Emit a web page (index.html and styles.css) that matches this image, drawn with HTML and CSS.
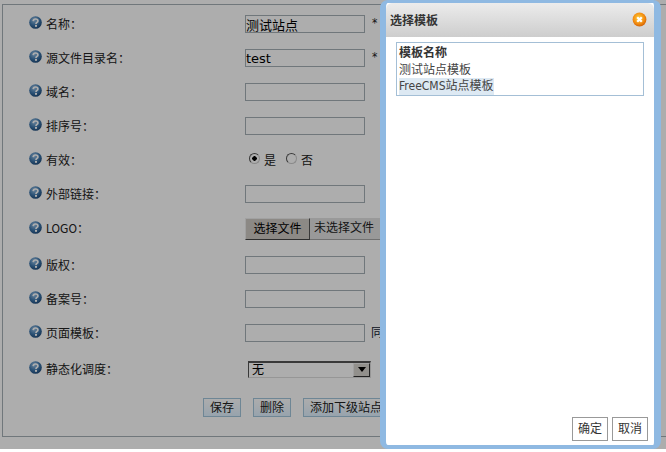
FILE: index.html
```html
<!DOCTYPE html>
<html lang="zh-CN">
<head>
<meta charset="utf-8">
<title>选择模板</title>
<link rel="stylesheet" href="styles.css">
</head>
<body>
<svg class="defs" width="0" height="0" aria-hidden="true">
  <defs>
    <radialGradient id="hg" cx="40%" cy="30%" r="75%">
      <stop offset="0" stop-color="#9cc4e8"/>
      <stop offset=".55" stop-color="#4079ae"/>
      <stop offset="1" stop-color="#1a4675"/>
    </radialGradient>
    <symbol id="help" viewBox="0 0 13 13">
      <circle cx="6.5" cy="6.5" r="6.3" fill="url(#hg)"/>
      <path d="M4.2 5.1C4.3 3.7 5.3 3 6.6 3 8 3 8.9 3.8 8.9 4.9 8.9 6.4 7 6.5 7 7.9" fill="none" stroke="#fff" stroke-width="1.7"/>
      <rect x="6" y="8.9" width="2" height="1.9" fill="#fff"/>
    </symbol>
  </defs>
</svg>
<div class="frame">
  <div class="row"><svg class="help"><use href="#help"/></svg><label class="lbl">名称：</label><input class="txt" value="测试站点"><span class="req">*</span></div>
  <div class="row"><svg class="help"><use href="#help"/></svg><label class="lbl">源文件目录名：</label><input class="txt" value="test"><span class="req">*</span></div>
  <div class="row"><svg class="help"><use href="#help"/></svg><label class="lbl">域名：</label><input class="txt"></div>
  <div class="row"><svg class="help"><use href="#help"/></svg><label class="lbl">排序号：</label><input class="txt"></div>
  <div class="row"><svg class="help"><use href="#help"/></svg><label class="lbl">有效：</label>
    <div class="radios"><input class="radio" type="radio" name="v" checked><span class="rtext">是</span><input class="radio" type="radio" name="v"><span class="rtext">否</span></div>
  </div>
  <div class="row"><svg class="help"><use href="#help"/></svg><label class="lbl">外部链接：</label><input class="txt"></div>
  <div class="row row-file"><svg class="help"><use href="#help"/></svg><label class="lbl">LOGO：</label>
    <div class="file"><span class="file-btn">选择文件</span><span class="file-name">未选择文件</span></div>
  </div>
  <div class="row"><svg class="help"><use href="#help"/></svg><label class="lbl">版权：</label><input class="txt"></div>
  <div class="row"><svg class="help"><use href="#help"/></svg><label class="lbl">备案号：</label><input class="txt"></div>
  <div class="row"><svg class="help"><use href="#help"/></svg><label class="lbl">页面模板：</label><input class="txt"><span class="same">同步</span></div>
  <div class="row row-select"><svg class="help"><use href="#help"/></svg><label class="lbl">静态化调度：</label>
    <div class="select"><span class="select-val">无</span><span class="select-arrow"><svg width="8" height="5" viewBox="0 0 8 5"><path d="M0 0h8L4 5z" fill="#000"/></svg></span></div>
  </div>
  <div class="actions"><button class="act">保存</button><button class="act">删除</button><button class="act">添加下级站点</button></div>
</div>
<div class="overlay"></div>
<div class="dialog">
  <div class="dlg-title"><span>选择模板</span>
    <svg class="close" width="15" height="15" viewBox="0 0 15 15">
      <defs><radialGradient id="cg" cx="45%" cy="40%" r="65%"><stop offset="0" stop-color="#ffd23c"/><stop offset=".65" stop-color="#f28a10"/><stop offset="1" stop-color="#c95a05"/></radialGradient></defs>
      <circle cx="7.5" cy="7.5" r="6.9" fill="url(#cg)"/>
      <path d="M5.2 5.2l4.6 4.6M9.8 5.2l-4.6 4.6" stroke="#fff" stroke-width="2.3"/>
    </svg>
  </div>
  <div class="dlg-body">
    <div class="tlist">
      <div class="thead">模板名称</div>
      <div class="titem">测试站点模板</div>
      <div class="titem"><span class="sel">FreeCMS站点模板</span></div>
    </div>
  </div>
  <div class="dlg-foot"><button class="dbtn">确定</button><button class="dbtn">取消</button></div>
</div>
</body>
</html>
```
FILE: styles.css
```css
html, body { margin: 0; padding: 0; height: 100%; overflow: hidden; background: #fff; }
body { font: 12px/16px "DejaVu Sans Condensed", "Noto Sans CJK SC", sans-serif; color: #222; }
.defs { position: absolute; }
.frame {
  width: 664px; height: 429px; margin: 4px 0 0 2px; padding-top: 2px; box-sizing: content-box;
  border: 1px solid #a5b0b6; border-right: 0;
}
.row { display: flex; align-items: center; height: 34px; padding-left: 26px; }
.row-file { height: 35px; }
.row-file .lbl { padding-top: 0; }
.row-file + .row { margin-top: 2px; }
.row-select { height: 36px; margin-top: 1px; }
.help { width: 13px; height: 13px; margin-top: -3px; flex: none; }
.lbl { width: 199px; padding: 2px 0 0 4px; flex: none; }
.txt {
  width: 120px; height: 18px; box-sizing: border-box; margin: 0; padding: 0; flex: none;
  border: 1px solid #a5b0b6; background: transparent; color: #000;
  font: 13px/16px "DejaVu Sans", "Noto Sans CJK SC", sans-serif;
}
.req { margin-left: 7px; margin-top: -3px; }
.same { margin-left: 6px; color: #123; }
.radios { display: flex; align-items: center; margin-left: 4px; }
.radio {
  appearance: none; width: 11px; height: 11px; margin: -3px 0 0; border-radius: 50%;
  border: 1px solid #555; border-right-color: #ccc; border-bottom-color: #ccc; box-sizing: border-box; background: transparent;
}
.radio:checked { background: radial-gradient(circle, #000 0 2px, transparent 2.5px); }
.rtext { margin: 2px 10px 0 4px; }
.file { display: flex; width: 135px; height: 22px; line-height: 20px; flex: none; overflow: hidden; }
.file-btn {
  width: 65px; box-sizing: border-box; text-align: center; flex: none; color: #000;
  background: #cfcac4; border: 1px solid; border-color: #eee #555 #444 #eee;
}
.file-name {
  flex: 1; padding-left: 4px; background: #e2e2e2; border-bottom: 1px solid #a5a5a5; white-space: nowrap; box-sizing: border-box;
}
.select {
  display: flex; margin-left: 3px; width: 123px; height: 17px; box-sizing: border-box;
  border: 1px solid; border-color: #555 #ddd #ddd #555; border-top-width: 2px; line-height: 14px; flex: none;
}
.select-val { flex: 1; padding-left: 3px; color: #000; }
.select-arrow {
  width: 17px; display: flex; align-items: center; justify-content: center;
  background: #d8d4ce; border: 1px solid; border-color: #eee #333 #333 #eee; box-sizing: border-box;
}
.actions { display: flex; gap: 12px; padding: 11px 0 0 200px; }
.act {
  height: 19px; padding: 0 6px; margin: 0; white-space: nowrap; color: #222;
  font: inherit; line-height: 16px;
  border: 1px solid #a3c6dc; background: linear-gradient(#fff, #e0f1ff);
}
.overlay { position: absolute; left: 0; top: 0; width: 100%; height: 449px; background: rgba(0,0,0,.32); }
.dialog {
  position: absolute; left: 380px; top: 0; width: 281px; height: 449px; box-sizing: border-box;
  display: flex; flex-direction: column;
  background: #fff; border: solid #8fb9e2; border-width: 3px 7px 4px 6px; border-radius: 8px;
}
.dlg-title {
  display: flex; align-items: center; justify-content: space-between; height: 34px; flex: none;
  padding: 2px 7px 0 4px; box-sizing: border-box; font-weight: 700; color: #333; font-size: 12px;
  background: linear-gradient(#ececec, #cdcdcd); border-radius: 6px 6px 0 0;
}
.close { margin-top: -4px; }
.dlg-body { flex: 1; padding: 5px 10px 0; }
.tlist { border: 1px solid #a4bfd6; height: 54px; box-sizing: border-box; padding: 2px; line-height: 16.5px; color: #444; }
.thead { font-weight: 700; color: #333; }
.sel { background: #dde9f3; display: inline-block; }
.dlg-foot { display: flex; justify-content: flex-end; gap: 4px; padding: 0 6px 4px 0; }
.dbtn {
  width: 36px; height: 24px; padding: 0; margin: 0; font: inherit; color: #333;
  background: #fff; border: 1px solid #999;
}
```
